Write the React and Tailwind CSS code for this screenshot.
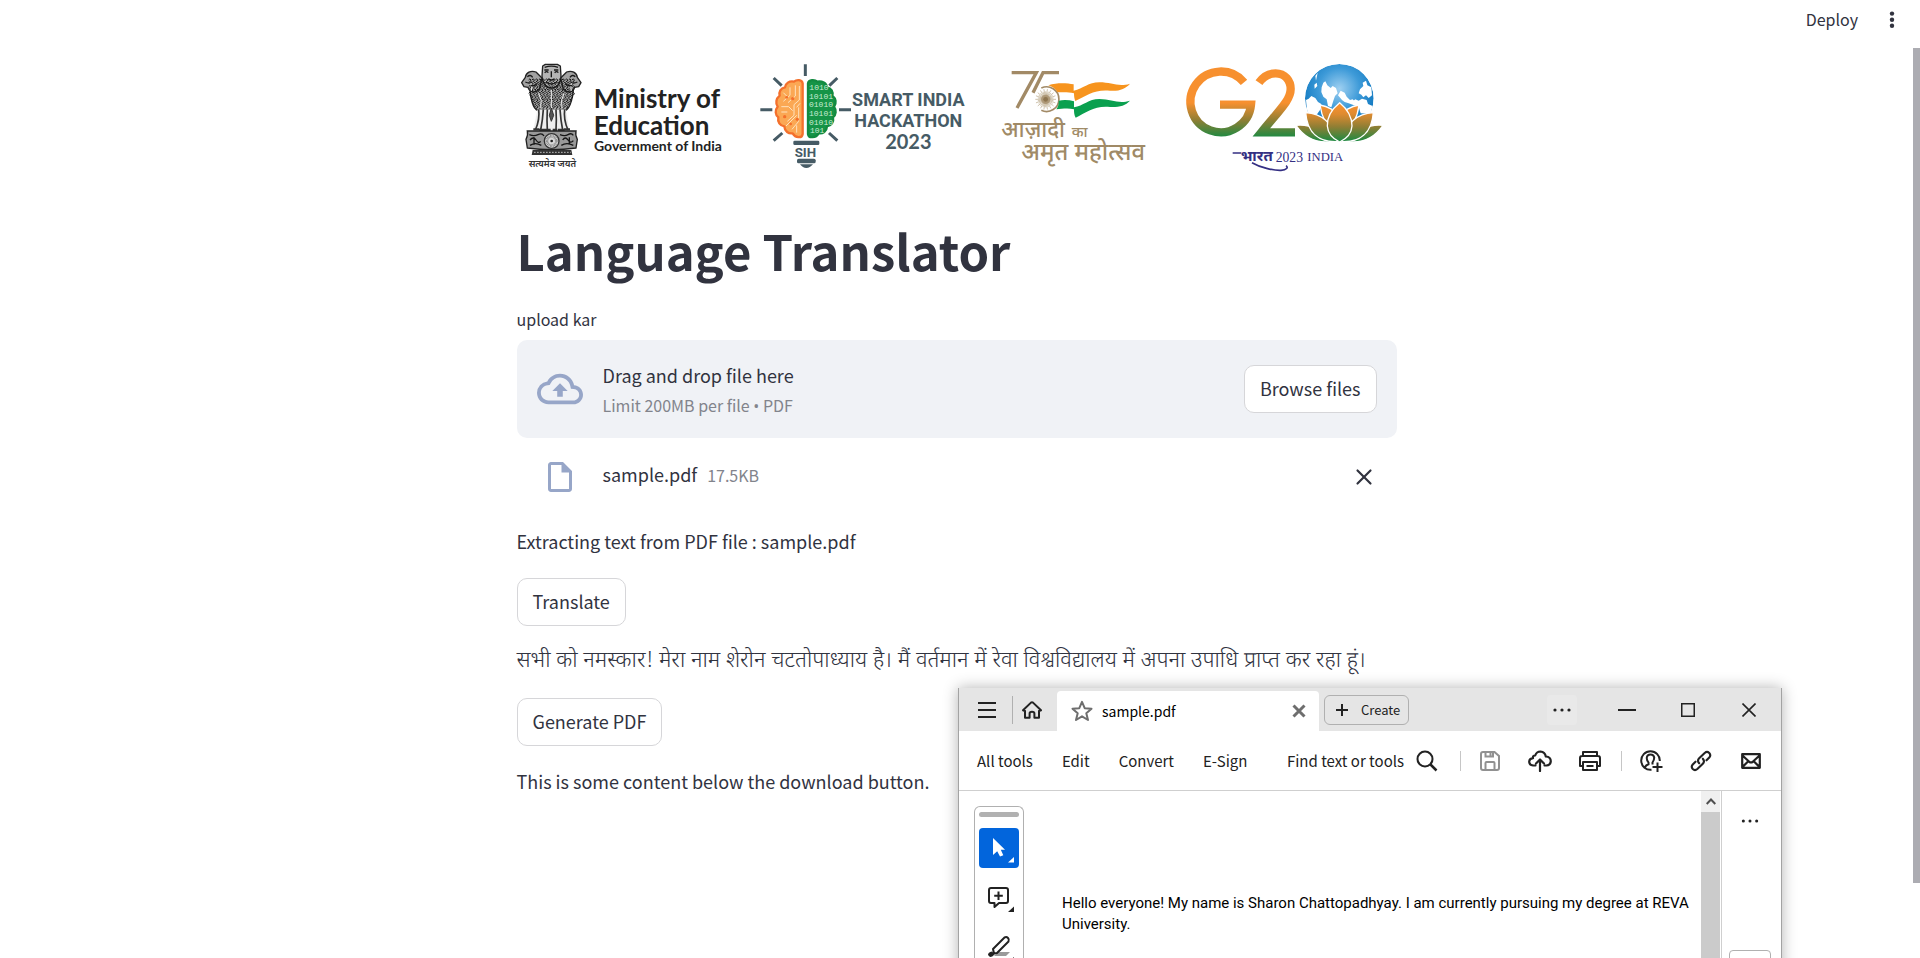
import React from "react";
import { MdOutlineCloudUpload, MdOutlineInsertDriveFile } from "react-icons/md";
import { X } from "lucide-react";

const UI_FONT = "font-['Noto_Sans_CJK_SC','Noto_Sans_Devanagari','Noto_Sans',sans-serif]";

function MinistryLogo() {
  const curls = [];
  for (let r = 0; r < 9; r++) {
    for (let c = 0; c < 14; c++) {
      const x = 60 + c * 10 + (r % 2) * 5;
      const y = 90 + r * 10;
      if (Math.abs(x - 124) > 70 - Math.max(0, r - 4) * 5) continue;
      curls.push(`M${x - 4} ${y} q4 -7 7 0 q-1 6 -5 5`);
    }
  }
  return (
    <svg viewBox="21 0 699 390" className="w-[233px] h-[130px]" role="img" aria-label="Ministry of Education, Government of India">
      <g fill="#a2a2a2" stroke="#222" strokeWidth="4" strokeLinejoin="round">
        <path d="M58 92 C60 150 72 178 84 182 H166 C180 174 190 150 192 92 C170 78 80 78 58 92Z" />
        <path d="M78 66 C62 60 48 68 46 82 L35 98 L42 110 L54 112 C58 126 74 132 88 118 L96 84Z" />
        <path d="M170 66 C186 60 200 68 202 82 L213 98 L206 110 L194 112 C190 126 174 132 160 118 L152 84Z" />
        <path d="M98 48 L106 43 H142 L151 48 L153 78 C153 98 142 114 125 114 C107 114 96 98 96 78Z" fill="#b5b5b5" />
      </g>
      <path d={curls.join(" ")} fill="none" stroke="#151515" strokeWidth="3" />
      <path d="M60 96 q10 12 4 26 M188 96 q-10 12 -4 26 M86 130 q12 22 6 44 M162 130 q-12 22 -6 44 M124 120 v54" stroke="#eee" strokeWidth="3" fill="none" />
      <g fill="none" stroke="#1a1a1a" strokeWidth="4">
        <path d="M103 60 h13 M132 60 h13 M104 68 q6 -6 11 0 M134 68 q6 -6 11 0 M124 64 v18 M114 86 q10 8 20 0 M108 96 q16 12 32 0 M104 52 q20 -7 40 0" />
        <path d="M52 80 q10 -8 16 2 M46 96 q12 6 20 0 M62 106 q12 4 20 -6 M196 80 q-10 -8 -16 2 M202 96 q-12 6 -20 0 M186 106 q-12 4 -20 -6" />
      </g>
      <path d="M82 180 H168 L178 240 H70Z" fill="#ededed" />
      <g fill="none" stroke="#333" strokeWidth="5">
        <path d="M86 178 Q90 208 76 240 M100 178 Q98 210 92 240 M112 178 Q110 212 112 240 M138 178 Q140 212 138 240 M150 178 Q152 210 158 240 M164 178 Q160 208 174 240" />
        <path d="M124 174 L118 196 L124 214 L131 196Z" fill="#555" strokeWidth="3" />
        <path d="M70 238 h18 M88 240 h20 M108 240 h14 M128 240 h14 M144 240 h20 M162 238 h18" strokeWidth="7" />
      </g>
      <path d="M52 243 H198 C196 252 196 258 202 268 L198 294 Q125 304 52 294 L48 268 C54 258 54 252 52 243Z" fill="#999" stroke="#222" strokeWidth="4" />
      <path d="M58 254 q14 6 26 0 t18 4 M60 270 q10 -12 18 0 t14 4 M60 286 q16 -10 34 0 M150 254 q14 6 24 0 t16 2 M158 270 q8 -12 16 0 t16 2 M154 286 q16 -10 36 0 M72 262 v22 M178 262 v22" fill="none" stroke="#151515" strokeWidth="4" />
      <circle cx="125" cy="273" r="22" fill="#d8d8d8" stroke="#333" strokeWidth="4" />
      <circle cx="125" cy="273" r="14" fill="none" stroke="#777" strokeWidth="8" strokeDasharray="2 2" />
      <circle cx="125" cy="273" r="4" fill="#222" />
      <path d="M68 300 H184 L187 315 H65Z" fill="#333" />
      <path d="M72 307 H182" stroke="#bbb" strokeWidth="3" strokeDasharray="5 4" />
      <g fill="#333" fontFamily="Noto Sans Devanagari, Noto Sans, sans-serif" fontWeight="600">
        <text x="56" y="351" fontSize="28">सत्यमेव जयते</text>
      </g>
      <g fill="#222" fontFamily="Lato, sans-serif" fontWeight="700">
        <text x="251" y="173" fontSize="78">Ministry of</text>
        <text x="251" y="254" fontSize="78">Education</text>
        <text x="252" y="303" fontSize="42">Government of India</text>
      </g>
    </svg>
  );
}

function HackathonLogo() {
  return (
    <svg viewBox="0 0 690 390" className="w-[230px] h-[130px]" role="img" aria-label="Smart India Hackathon 2023">
      <g stroke="#465b65" strokeWidth="9" strokeLinecap="butt" fill="none">
        <path d="M166 43 V78 M71 84 L95 107 M262 84 L238 107 M31 179 H67 M267 179 H303 M71 272 L97 249 M262 272 L237 249" />
      </g>
      <path d="M158 100 C156 88 140 88 132 95 C118 92 106 100 105 112 C92 114 86 126 89 137 C78 146 76 160 83 170 C74 180 76 196 85 202 C82 216 90 228 103 229 C104 244 116 252 128 250 C136 264 156 266 158 252Z" fill="#fba854" stroke="#f4702c" strokeWidth="7" strokeLinejoin="round" />
      <path d="M148 108 V150 L132 164 V196 L112 214 M136 106 V138 L114 158 M120 112 V136 L100 154 M146 172 V214 L126 238 M94 170 H116 L128 182 M94 186 H112 M108 228 L140 196 M140 248 V226 M100 128 L110 138 M150 160 L140 172" fill="none" stroke="#ffe2bd" strokeWidth="3" />
      <g fill="#f4702c">
        <circle cx="128" cy="146" r="5" /><circle cx="104" cy="200" r="5" /><circle cx="142" cy="208" r="5" /><circle cx="122" cy="222" r="4" /><circle cx="110" cy="142" r="4" />
      </g>
      <path d="M174 100 C176 88 194 88 202 95 C216 92 230 100 231 112 C244 114 250 126 247 137 C258 146 260 160 252 170 C260 180 258 196 249 202 C252 216 244 228 231 229 C230 244 218 252 206 250 C198 264 176 266 174 252Z" fill="#169447" stroke="#128a40" strokeWidth="7" strokeLinejoin="round" />
      <g fill="#c9ecd4" fontFamily="Liberation Mono, monospace" fontSize="24">
        <text x="178" y="120">1010</text>
        <text x="177" y="146">10101</text>
        <text x="177" y="172">01010</text>
        <text x="177" y="198">10101</text>
        <text x="177" y="224">01010</text>
        <text x="180" y="250">101</text>
      </g>
      <g fill="#465b65">
        <rect x="130" y="272" width="78" height="13" rx="4" />
        <rect x="141" y="326" width="56" height="14" rx="5" />
        <path d="M150 343 H189 Q180 354 169 354 Q158 354 150 343Z" />
      </g>
      <g fill="#465b65" fontFamily="Roboto, sans-serif" fontWeight="700">
        <text x="134" y="320" fontSize="40">SIH</text>
      </g>
      <g fill="#465b65" fontFamily="Roboto, sans-serif" fontWeight="700" textAnchor="middle">
        <text x="475" y="167" fontSize="54">SMART INDIA</text>
        <text x="475" y="232" fontSize="54">HACKATHON</text>
        <text x="475" y="297" fontSize="60" fontFamily="Lato, sans-serif">2023</text>
      </g>
    </svg>
  );
}

function AmritLogo() {
  const rays = Array.from({ length: 36 }, (_, i) => {
    const a = (i * Math.PI) / 18;
    const r = i % 2 ? 24 : 31;
    return `M197 148 L${(197 + r * Math.cos(a)).toFixed(1)} ${(148 + r * Math.sin(a)).toFixed(1)}`;
  }).join(" ");
  return (
    <svg viewBox="0 0 570 390" className="w-[190px] h-[130px]" role="img" aria-label="आज़ादी का अमृत महोत्सव">
      <g fill="none" stroke="#a28a66" strokeWidth="10" strokeLinejoin="miter">
        <path d="M95 68 H169 L111 174" />
        <path d="M237 68 H189 L159 128" />
        <path d="M184 114 A37 37 0 1 1 184 181" strokeWidth="5" />
      </g>
      <path d={rays} stroke="#b7a484" strokeWidth="2" />
      <circle cx="197" cy="148" r="14" fill="#a28a66" fillOpacity=".7" />
      <circle cx="197" cy="148" r="7" fill="#8d7550" />
      <path d="M205 106 C235 96 262 100 281 103 V122 C310 116 325 97 358 97 C395 97 415 112 450 101 C436 117 418 124 390 122 C345 117 318 137 286 153 C283 146 282 140 282 130 C262 124 240 128 232 126 C224 114 216 110 205 106Z" fill="#f7941e" />
      <path d="M236 152 C252 149 268 150 282 154 V172 C310 168 325 147 358 147 C395 147 415 163 450 152 C436 167 418 172 390 171 C345 166 318 188 287 203 C282 194 282 186 282 178 C262 173 245 177 229 178 C234 170 237 163 236 152Z" fill="#0aa04f" />
      <g fill="#a08a66" fontFamily="Noto Sans Devanagari, Noto Sans, sans-serif" fontWeight="500">
        <text x="64" y="262" fontSize="66">आज़ादी</text>
        <text x="275" y="262" fontSize="45">का</text>
        <text x="124" y="331" fontSize="71">अमृत महोत्सव</text>
      </g>
    </svg>
  );
}

function G20Logo() {
  return (
    <svg viewBox="0 0 681 390" className="w-[227px] h-[130px]" role="img" aria-label="G20 भारत 2023 India">
      <defs>
        <linearGradient id="tri" gradientUnits="userSpaceOnUse" x1="0" y1="55" x2="0" y2="262">
          <stop offset="0" stopColor="#f7902f" />
          <stop offset=".5" stopColor="#f7902f" />
          <stop offset=".75" stopColor="#8f7e34" />
          <stop offset="1" stopColor="#1d8a42" />
        </linearGradient>
        <linearGradient id="petal" gradientUnits="userSpaceOnUse" x1="0" y1="165" x2="0" y2="274">
          <stop offset="0" stopColor="#f7902f" />
          <stop offset=".25" stopColor="#df8b30" />
          <stop offset=".6" stopColor="#8f7e34" />
          <stop offset="1" stopColor="#1d8a42" />
        </linearGradient>
        <radialGradient id="globe" cx=".5" cy=".36" r=".6">
          <stop offset="0" stopColor="#9fd0f1" />
          <stop offset=".5" stopColor="#3d9ad8" />
          <stop offset="1" stopColor="#0b74bd" />
        </radialGradient>
        <clipPath id="ball"><circle cx="508" cy="145" r="103" /></clipPath>
      </defs>
      <g fill="none" stroke="url(#tri)" strokeWidth="25">
        <path d="M222 97 A91 91 0 1 0 243 164 H150" />
        <path d="M267 98 C280 79 298 70 317 70 C345 70 362 92 362 117 C362 150 330 178 274 247 H375" strokeMiterlimit="6" />
      </g>
      <g clipPath="url(#ball)">
        <circle cx="508" cy="145" r="103" fill="url(#globe)" />
        <g fill="#fff">
          <path d="M436 78 L443 68 L438 92Z M433 104 L440 98 L442 108 L434 116Z" />
          <path d="M455 112 L460 98 L466 94 L472 106 L482 114 L488 108 L498 114 L503 130 L495 138 L490 152 L484 172 L474 168 L470 148 L460 140 L454 126Z" />
          <path d="M408 150 L416 146 L424 138 L436 144 L444 156 L454 162 L450 180 L440 194 L412 192Z" />
          <path d="M504 136 L512 122 L524 128 L530 140 L540 150 L548 148 L560 160 L552 166 L536 160 L524 156 L516 150Z" />
          <path d="M570 118 L580 108 L578 98 L588 92 L592 106 L604 112 L606 136 L596 144 L588 136 L580 142 L574 134 L566 130Z" />
          <path d="M546 156 L556 148 L566 152 L576 146 L590 150 L594 162 L608 168 L606 192 L572 190 L566 170 L552 166Z" />
        </g>
      </g>
      <path d="M405 190 Q508 225 611 190 L590 262 H430Z" fill="#fff" />
      <g fill="url(#petal)" stroke="#fff" strokeWidth="4" strokeLinejoin="round">
        <path d="M450 165 Q466 168 486 178 L496 250 Q458 222 450 165Z" />
        <path d="M567 165 Q550 168 531 178 L521 250 Q560 222 567 165Z" />
        <path d="M378 226 C412 222 450 236 480 275 C432 280 400 258 378 226Z" />
        <path d="M639 226 C604 222 567 236 537 275 C585 280 617 258 639 226Z" />
        <path d="M407 188 C452 190 486 214 504 275 C448 278 412 250 407 188Z" />
        <path d="M610 188 C565 190 531 214 513 275 C569 278 605 250 610 188Z" />
        <path d="M509 158 C482 180 471 200 472 228 C474 256 492 268 509 276 C526 268 544 256 546 228 C546 200 536 180 509 158Z" />
      </g>
      <g fill="#342f83">
        <text x="212" y="334" fontSize="45" fontWeight="700" fontFamily="Noto Sans Devanagari, Noto Sans, sans-serif">भारत</text>
        <text x="317" y="336" fontSize="41" fontFamily="Liberation Serif, serif">2023</text>
        <text x="412" y="334" fontSize="38" fontFamily="Liberation Serif, serif">INDIA</text>
      </g>
      <path d="M188 309 H214 M246 338 C270 352 310 362 333 361 C350 360 356 352 348 347" fill="none" stroke="#342f83" strokeWidth="5" />
    </svg>
  );
}

function Dots({ className = "" }) {
  return (
    <svg viewBox="0 0 18 4" className={`w-[18px] h-1 ${className}`} fill="currentColor">
      <circle cx="2" cy="2" r="1.6" /><circle cx="9" cy="2" r="1.6" /><circle cx="16" cy="2" r="1.6" />
    </svg>
  );
}

function Button({ children }) {
  return (
    <button type="button" className="h-12 rounded-[10px] border border-[#d6d6d9] bg-white px-[15px] pb-0.5 text-lg leading-8">
      {children}
    </button>
  );
}

function Uploader() {
  return (
    <section>
      <label htmlFor="pdf" className="mt-[23px] block text-base leading-[26px]">upload kar</label>
      <div className="mt-2 flex h-[98px] items-center rounded-[10px] bg-[#f0f2f6] px-5">
        <MdOutlineCloudUpload className="size-[46px] text-[#97a6c8]" />
        <div className="ml-5 grow">
          <p className="text-lg leading-8">Drag and drop file here</p>
          <p className="text-base leading-7 text-[#82848c]">
            Limit 200MB per file <span className="font-['Open_Sans',sans-serif]">•</span> PDF
          </p>
        </div>
        <input id="pdf" type="file" accept=".pdf" className="hidden" />
        <Button>Browse files</Button>
      </div>
      <div className="mt-[21px] flex items-start pl-[25px] pr-5">
        <MdOutlineInsertDriveFile className="size-9 text-[#97a6c8]" />
        <p className="ml-[25px] grow text-lg leading-[30px]">
          sample.pdf<span className="ml-2.5 text-base text-[#82848c]">17.5KB</span>
        </p>
        <button type="button" aria-label="Remove file" className="mt-[5px]">
          <X className="size-[26px]" strokeWidth={2} />
        </button>
      </div>
    </section>
  );
}

function TitleBar() {
  return (
    <div className="flex h-[43px] bg-[#e5e5e5] pl-[19px]">
      <button type="button" aria-label="Menu" className="self-center">
        <svg viewBox="0 0 18 16" className="w-[18px] h-4" stroke="#222" strokeWidth="2"><path d="M0 1H18M0 8H18M0 15H18" /></svg>
      </button>
      <span className="ml-4 h-7 w-px self-center bg-[#b0b0b0]" />
      <button type="button" aria-label="Home" className="ml-[9px] self-center">
        <svg viewBox="0 0 20 18" className="w-5 h-[18px]" fill="none" stroke="#222" strokeWidth="2" strokeLinejoin="round" strokeLinecap="round">
          <path d="M1 9.2 L9 1.6 Q10 .8 11 1.6 L19 9.2 L17 10 V16.8 H12.4 V12.4 Q12.4 10.8 10 10.8 Q7.6 10.8 7.6 12.4 V16.8 H3 V10Z" />
        </svg>
      </button>
      <div className="ml-[15px] mt-[3px] flex w-[262px] items-center rounded-t bg-white pl-[14px] pr-[13px] text-black">
        <svg viewBox="0 0 22 22" className="size-[22px]" fill="none" stroke="#6e6e6e" strokeWidth="2" strokeLinejoin="round">
          <path d="M11 1.8 L13.7 8.2 L20.5 8.7 L15.3 13.2 L17 20 L11 16.3 L5 20 L6.7 13.2 L1.5 8.7 L8.3 8.2Z" />
        </svg>
        <span className="ml-[9px] grow text-sm">sample.pdf</span>
        <button type="button" aria-label="Close tab">
          <svg viewBox="0 0 14 14" className="size-3.5" stroke="#6e6e6e" strokeWidth="3"><path d="M1.5 1.5L12.5 12.5M12.5 1.5L1.5 12.5" /></svg>
        </button>
      </div>
      <button type="button" className="ml-[5px] flex h-[30px] w-[85px] items-center self-center rounded-md border border-[#b0b0b0] pl-[11px] text-[13px] leading-4">
        <svg viewBox="0 0 12 12" className="size-3" stroke="#222" strokeWidth="2"><path d="M6 0V12M0 6H12" /></svg>
        <span className="ml-[13px]">Create</span>
      </button>
      <div className="ml-auto mr-[25px] flex items-center">
        <button type="button" aria-label="More" className="grid size-[30px] place-items-center rounded bg-[#e9e9e9]"><Dots /></button>
        <button type="button" aria-label="Minimize" className="ml-[41px]"><svg viewBox="0 0 18 2" className="w-[18px] h-0.5" fill="#222"><path d="M0 0H18V2H0Z" /></svg></button>
        <button type="button" aria-label="Maximize" className="ml-[45px]"><svg viewBox="0 0 14 14" className="size-3.5" fill="none" stroke="#222" strokeWidth="1.5"><path d="M.75 .75H13.25V13.25H.75Z" /></svg></button>
        <button type="button" aria-label="Close window" className="ml-[47px]"><svg viewBox="0 0 14 14" className="size-3.5" stroke="#222" strokeWidth="1.6"><path d="M.5 .5L13.5 13.5M13.5 .5L.5 13.5" /></svg></button>
      </div>
    </div>
  );
}

function ToolBar() {
  return (
    <div className="flex h-[60px] items-center border-b border-[#cfcfcf] pl-[18px] pr-5 text-[15px] leading-5 text-[#222]">
      <nav className="flex grow gap-[29px]">
        <button type="button">All tools</button>
        <button type="button">Edit</button>
        <button type="button">Convert</button>
        <button type="button">E-Sign</button>
      </nav>
      <button type="button" className="mr-3">Find text or tools</button>
      <svg viewBox="0 0 22 22" className="size-[22px]" fill="none" stroke="#222" strokeWidth="2"><circle cx="9" cy="9" r="7.5" /><path d="M14.5 14.5L20.5 20.5" strokeWidth="2.5" /></svg>
      <span className="ml-[22px] mr-[19px] h-5 w-px bg-[#c6c6c6]" />
      <svg viewBox="0 0 20 20" className="mr-[28px] size-5" fill="none" stroke="#919191" strokeWidth="2">
        <path d="M1 3Q1 1 3 1H14.5L19 5V17Q19 19 17 19H3Q1 19 1 17Z M5.5 1V5.5H13V1 M5.5 19V12Q5.5 11 6.5 11H13.5Q14.5 11 14.5 12V19 M10.5 1V5" />
      </svg>
      <svg viewBox="0 0 24 22" className="mr-[27px] w-6 h-[22px]" fill="none" stroke="#222" strokeWidth="2.2" strokeLinecap="round" strokeLinejoin="round">
        <path d="M7.5 15.5H5Q1.2 15 1.2 11.5Q1.5 8.5 5 8.2Q4.5 5.5 7.2 5.5Q8.5 1.5 12.5 1.5Q17 2 17.8 6.5Q22.8 7 22.8 11.2Q22.5 15.2 18.5 15.5H16.5 M12 21V10 M8 13.5L12 9.5L16 13.5" />
      </svg>
      <svg viewBox="0 0 22 20" className="w-[22px] h-5" fill="none" stroke="#222" strokeWidth="2" strokeLinejoin="round">
        <path d="M4 5V1H18V5 M4 15H1V7Q1 5 3 5H19Q21 5 21 7V15H18 M4 11H18V19H4Z M7.5 15H14.5" />
      </svg>
      <span className="ml-5 mr-[18px] h-5 w-px bg-[#c6c6c6]" />
      <svg viewBox="0 0 24 22" className="mr-[26px] w-6 h-[22px]" fill="none" stroke="#222" strokeWidth="2">
        <path d="M11.5 19.8A9.3 9.3 0 1 1 19.8 11 M5 17Q6 15 8.5 14.2V12.5Q6.5 10 6.8 7.5Q7.2 4.5 10.5 4.5Q13.8 4.5 14.2 7.5Q14.3 10 12.5 12.5V14.5 M17.5 12.5V22M12.5 17H22.5" />
      </svg>
      <svg viewBox="0 0 24 24" className="mr-[29px] size-[22px]" fill="none" stroke="#222" strokeWidth="2.3" strokeLinecap="round">
        <path d="M10 14.5Q7.5 11.5 10 9L16 3.2Q18.6 1 21 3.2Q23.2 5.6 21 8.2L18 11.2 M14 9.5Q16.5 12.5 14 15L8 20.8Q5.4 23 3 20.8Q.8 18.4 3 15.8L6 12.8" />
      </svg>
      <svg viewBox="0 0 20 16" className="w-5 h-4" fill="none" stroke="#222" strokeWidth="2.2" strokeLinejoin="round">
        <path d="M1.2 1.2H18.8V14.8H1.2Z M1.5 2.5L8.5 9Q10 10 11.5 9L18.5 2.5 M1.5 14L7 8.5M18.5 14L13 8.5" />
      </svg>
    </div>
  );
}

function PdfWindow() {
  return (
    <aside className="absolute left-[958px] top-[688px] h-[300px] w-[824px] border-x border-[#a3a3a3] bg-white text-[#222] shadow-[0_0_14px_rgba(0,0,0,0.3)]">
      <TitleBar />
      <ToolBar />
      <div className="flex h-[197px]">
        <div className="ml-[15px] mt-[15px] flex w-[50px] shrink-0 flex-col items-center rounded-t-md border border-b-0 border-[#b0b0b0]">
          <span className="mt-[5px] h-[5px] w-10 rounded-full bg-[#b1b1b1]" />
          <button type="button" aria-label="Select" className="mt-[11px] size-10 rounded bg-[#0265dc]">
            <svg viewBox="0 0 40 40" className="size-10" fill="#fff">
              <path d="M14 10V27L18.2 23.2L21 28.6L24.3 27.2L21.8 21.8H26Z" />
              <path d="M35 29V34.5H29Z" />
            </svg>
          </button>
          <button type="button" aria-label="Add comment" className="mt-[9px]">
            <svg viewBox="0 0 40 40" className="size-10" fill="none" stroke="#222" strokeWidth="2" strokeLinejoin="round">
              <path d="M12 11H27Q29 11 29 13V24Q29 26 27 26H20L15.5 30V26H12Q10 26 10 24V13Q10 11 12 11Z M19.5 14.5V23M15.2 18.7H23.8" />
              <path d="M35 29.5V35H29Z" fill="#222" stroke="none" />
            </svg>
          </button>
          <button type="button" aria-label="Highlight" className="mt-[9px]">
            <svg viewBox="0 0 40 40" className="size-10" fill="none" stroke="#222" strokeWidth="2" strokeLinejoin="round">
              <path d="M19 26H31L27 30H15Z" fill="#9a9a9a" stroke="none" />
              <path d="M14 23L25.5 11.5Q27.5 10.5 29 12Q30.5 13.5 29.5 15.5L18 27L15 27.5Z" />
              <path d="M9 29Q9 26 13 25.5L15.5 28Q14 31 11 31Z" fill="#222" stroke="none" />
              <path d="M35 31V36.5H29Z" fill="#222" stroke="none" />
            </svg>
          </button>
        </div>
        <p className="ml-[38px] mt-[102px] grow font-[Roboto,sans-serif] text-[15px] leading-[21px] text-black">
          Hello everyone! My name is Sharon Chattopadhyay. I am currently pursuing my degree at REVA University.
        </p>
        <div className="w-[19px] shrink-0 bg-[#cbcbcb]">
          <div className="grid h-[21px] place-items-center bg-[#f0f0f0]">
            <svg viewBox="0 0 10 7" className="w-2.5 h-[7px]" fill="none" stroke="#505050" strokeWidth="2"><path d="M.7 6L5 1.5L9.3 6" /></svg>
          </div>
        </div>
        <div className="ml-px flex w-[60px] shrink-0 flex-col items-center border-l border-[#cfcfcf] pr-1">
          <Dots className="mt-7" />
          <span className="mt-[127px] h-10 w-[42px] rounded border border-[#b0b0b0]" />
        </div>
      </div>
    </aside>
  );
}

export default function App() {
  return (
    <div className={`relative flex h-screen flex-col overflow-hidden bg-white text-[#31333f] ${UI_FONT}`}>
      <header className="flex h-10 shrink-0 items-center justify-end pb-0.5 pr-[21px]">
        <button type="button" className="text-base leading-6">Deploy</button>
        <button type="button" aria-label="Main menu" className="ml-[27px]">
          <svg viewBox="0 0 14 18" className="w-3.5 h-[18px]" fill="currentColor">
            <circle cx="7" cy="3.6" r="2.2" /><circle cx="7" cy="9.8" r="2.2" /><circle cx="7" cy="15.8" r="2.2" />
          </svg>
        </button>
      </header>
      <div className="flex grow">
        <main className="grow pt-2.5">
          <div className="mx-auto max-w-[880px]">
            <div className="flex">
              <MinistryLogo />
              <HackathonLogo />
              <AmritLogo />
              <G20Logo />
            </div>
            <h1 className="mt-[37px] text-[49px] font-bold leading-[66px]">Language Translator</h1>
            <Uploader />
            <div className="mt-[31px] flex flex-col items-start gap-5 text-lg leading-8">
              <p className="pb-0.5 leading-[30px]">Extracting text from PDF file : sample.pdf</p>
              <Button>Translate</Button>
              <p className="font-['Noto_Sans_Devanagari','Noto_Sans',sans-serif] text-[22px] font-light leading-8 whitespace-nowrap">
                सभी को नमस्कार! मेरा नाम शेरोन चटतोपाध्याय है। मैं वर्तमान में रेवा विश्वविद्यालय में अपना उपाधि प्राप्त कर रहा हूं।
              </p>
              <Button>Generate PDF</Button>
              <p className="pb-0.5 leading-[30px]">This is some content below the download button.</p>
            </div>
          </div>
        </main>
        <div className="mt-2 h-[835px] w-[7px] shrink-0 bg-[#acacb2]" />
      </div>
      <PdfWindow />
    </div>
  );
}
